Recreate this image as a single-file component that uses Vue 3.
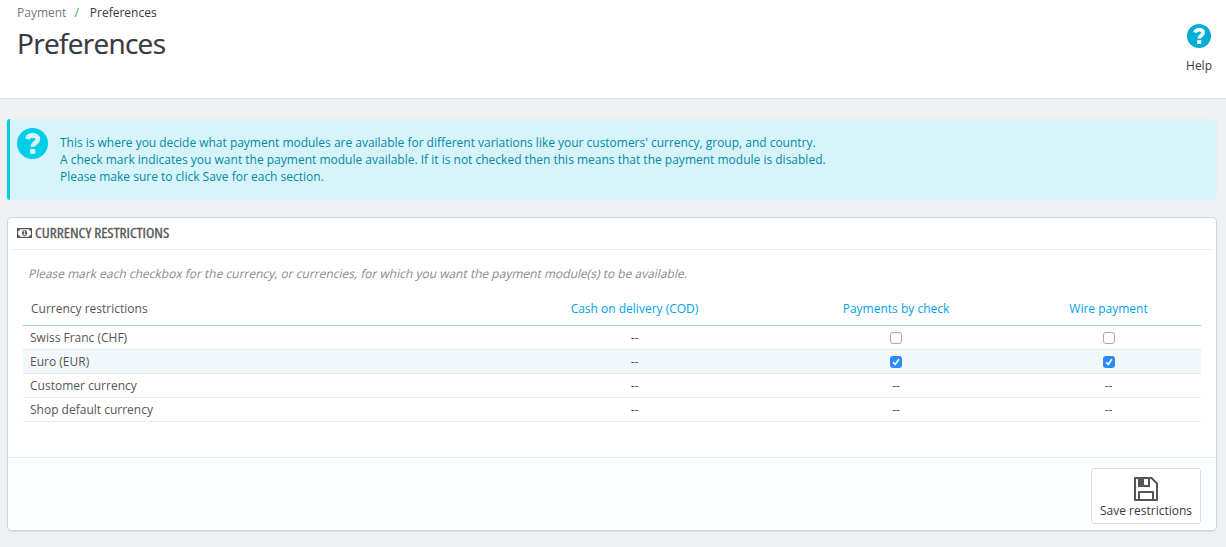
<script setup>
import { ref } from 'vue'

const modules = ['Cash on delivery (COD)', 'Payments by check', 'Wire payment']

// null: the module does not offer a choice for this currency
const rows = ref([
  { name: 'Swiss Franc (CHF)', cells: [null, false, false] },
  { name: 'Euro (EUR)', cells: [null, true, true] },
  { name: 'Customer currency', cells: [null, null, null] },
  { name: 'Shop default currency', cells: [null, null, null] },
])
</script>

<template>
  <div class="page">
    <header class="head">
      <div>
        <nav class="crumbs">
          <span class="parent">Payment</span><span class="sep">/</span><span class="current">Preferences</span>
        </nav>
        <h1>Preferences</h1>
      </div>
      <a class="help">
        <svg width="24" height="24" viewBox="0 0 24 24">
          <circle cx="12" cy="12" r="12" fill="#00aed4" />
          <path d="M7.900 8.600C8.500 6.600 10 5.700 12.100 5.700c2.300 0 4.100 1.100 4.100 3 0 2.700-4 2.900-4 5.800" fill="none" stroke="#fff" stroke-width="3.600" />
          <rect x="10.200" y="16.200" width="4" height="3.800" fill="#fff" />
        </svg>
        <span>Help</span>
      </a>
    </header>

    <section class="alert">
      <svg width="31" height="31" viewBox="0 0 24 24">
        <circle cx="12" cy="12" r="12" fill="#00cde6" />
        <path d="M7.900 8.600C8.500 6.600 10 5.700 12.100 5.700c2.300 0 4.100 1.100 4.100 3 0 2.700-4 2.900-4 5.800" fill="none" stroke="#d8f4fb" stroke-width="3.600" />
        <rect x="10.200" y="16.200" width="4" height="3.800" fill="#d8f4fb" />
      </svg>
      <div class="lines">
        <p class="l1">This is where you decide what payment modules are available for different variations like your customers' currency, group, and country.</p>
        <p>A check mark indicates you want the payment module available. If it is not checked then this means that the payment module is disabled.</p>
        <p>Please make sure to click Save for each section.</p>
      </div>
    </section>

    <section class="panel">
      <h2>
        <svg width="15" height="10" viewBox="0 0 15 10">
          <path fill="#555" fill-rule="evenodd" d="M0 0h15v10H0zM3 1.200A2 2 0 0 1 1.200 3v4A2 2 0 0 1 3 8.800h9A2 2 0 0 1 13.800 7V3A2 2 0 0 1 12 1.200z" />
          <ellipse cx="7.500" cy="5" rx="2.500" ry="3" fill="#555" />
          <path d="M6.500 3.700l1.100-.7v3.500M6.300 6.700h2.500" fill="none" stroke="#fff" stroke-width=".9" />
        </svg>
        <span>Currency restrictions</span>
      </h2>
      <p class="hint">Please mark each checkbox for the currency, or currencies, for which you want the payment module(s) to be available.</p>
      <table>
        <colgroup><col class="c0" /><col class="c1" /><col class="c2" /><col class="c3" /></colgroup>
        <thead>
          <tr>
            <th>Currency restrictions</th>
            <th v-for="m in modules" :key="m" class="mod">{{ m }}</th>
          </tr>
        </thead>
        <tbody>
          <tr v-for="row in rows" :key="row.name">
            <td>{{ row.name }}</td>
            <td v-for="(cell, i) in row.cells" :key="i" class="val">
              <span v-if="cell === null">--</span>
              <button v-else class="box" :class="{ on: cell }" @click="row.cells[i] = !cell">
                <svg v-if="cell" width="12" height="12" viewBox="0 0 12 12">
                  <path d="M3.200 6.300l2 2.200 3.600-5.300" fill="none" stroke="#fff" stroke-width="1.700" />
                </svg>
              </button>
            </td>
          </tr>
        </tbody>
      </table>
      <footer>
        <button class="save">
          <svg width="24" height="24" viewBox="0 0 24 24">
            <path d="M1 1h16.500L23 6.500V23H1z" fill="none" stroke="#555" stroke-width="2" stroke-linejoin="round" />
            <path d="M5 1v8h10V1" fill="none" stroke="#555" stroke-width="2" />
            <path d="M4 1h6v8H4z" fill="#555" />
            <path d="M5 23v-8h14v8" fill="none" stroke="#555" stroke-width="2" stroke-linejoin="round" />
          </svg>
          <span>Save restrictions</span>
        </button>
      </footer>
    </section>
  </div>
</template>

<style>
body {
  background: #eff0f3;
}
</style>

<style scoped>
.page {
  box-sizing: border-box;
  height: 547px;
  background: #eff0f3;
  font: 12px/17px "Open Sans", "Noto Sans", sans-serif;
  color: #555;
  overflow: hidden;
}
h1, h2, p {
  margin: 0;
  font-weight: 400;
}
button {
  font: inherit;
  padding: 0;
  box-sizing: border-box;
}
.head {
  display: flex;
  justify-content: space-between;
  box-sizing: border-box;
  height: 99px;
  padding: 4px 14px 0 17px;
  background: #fff;
  border-bottom: 1px solid #dcdddf;
}
.crumbs {
  display: flex;
}
.parent {
  color: #777;
}
.sep {
  color: #2fa84a;
  margin: 0 11px 0 8px;
}
.current {
  color: #363a41;
}
h1 {
  margin-top: 4px;
  font-size: 28px;
  line-height: 36px;
  letter-spacing: -0.7px;
  color: #363a41;
  -webkit-text-stroke: 0.2px #363a41;
}
.help {
  display: flex;
  flex-direction: column;
  align-items: center;
  gap: 9px;
  padding-top: 20px;
  color: #363a41;
}
.alert {
  display: flex;
  gap: 12px;
  box-sizing: border-box;
  height: 81px;
  margin: 20px 9px 0 7px;
  padding: 9px 0 0 7px;
  border-left: 3px solid #00cde6;
  border-radius: 3px;
  background: #d8f4fb;
  color: #018ba5;
}
.lines {
  padding-top: 6px;
  white-space: nowrap;
}
.l1 {
  letter-spacing: -0.015px;
}
.panel {
  box-sizing: border-box;
  height: 314px;
  margin: 17px 9px 0 7px;
  border: 1px solid #d0d4d9;
  border-radius: 5px;
  background: #fff;
  box-shadow: 0 1px 1px rgba(0, 0, 0, 0.08);
  display: flex;
  flex-direction: column;
  overflow: hidden;
}
h2 {
  display: flex;
  align-items: center;
  gap: 3px;
  box-sizing: border-box;
  height: 32px;
  margin: 0 4px;
  padding: 0 0 1px 5px;
  border-bottom: 1px solid #eaedef;
  font-size: 14px;
  font-stretch: 75%;
  text-transform: uppercase;
  white-space: nowrap;
}
h2 span {
  margin-top: -2px;
  transform: scaleX(1.1);
  transform-origin: left;
  -webkit-text-stroke: 0.3px #555;
}
.hint {
  margin: 15px 0 0 20.5px;
  align-self: flex-start;
  transform: skewX(-13deg);
  color: #8a8a8a;
  white-space: nowrap;
}
table {
  width: 1178px;
  margin: 10px 0 0 15px;
  border-collapse: separate;
  border-spacing: 0;
  table-layout: fixed;
}
.c0 { width: 470px; }
.c1 { width: 283px; }
.c2 { width: 240px; }
.c3 { width: 185px; }
th {
  height: 34px;
  box-sizing: border-box;
  padding: 0 0 0 8px;
  border-bottom: 1px solid #99cfe6;
  text-align: left;
  font-weight: 400;
}
th.mod {
  padding: 0;
  text-align: center;
  color: #00a4e7;
}
td {
  box-sizing: border-box;
  height: 24px;
  padding: 0 0 0 7px;
  border-bottom: 1px solid #e8ebed;
}
td.val {
  padding: 0;
  text-align: center;
}
tbody tr:nth-child(2) td {
  background: #f2f8fb;
}
.box {
  display: block;
  width: 12px;
  height: 12px;
  margin: 0 auto;
  border: 1px solid #a9a9a9;
  border-radius: 3px;
  background: #fff;
}
.box.on {
  border: 0;
  background: #2a8cfb;
}
.box svg {
  display: block;
}
footer {
  display: flex;
  justify-content: flex-end;
  margin-top: auto;
  box-sizing: border-box;
  height: 73px;
  padding: 10px 15px 0 0;
  border-top: 1px solid #e8ebed;
  background: #fcfdfe;
}
.save {
  display: flex;
  flex-direction: column;
  align-items: center;
  gap: 1px;
  width: 110px;
  height: 56px;
  padding-top: 8px;
  border: 1px solid #dcdddf;
  border-radius: 3px;
  background: #fff;
  color: #363a41;
  white-space: nowrap;
}
</style>
